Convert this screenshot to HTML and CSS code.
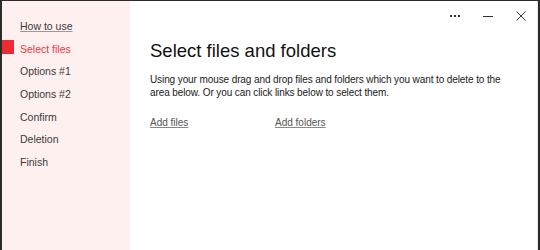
FILE: index.html
```html
<!DOCTYPE html>
<html>
<head>
<meta charset="utf-8">
<link rel="stylesheet" href="styles.css">
</head>
<body>
<div class="window">
  <aside class="sidebar">
    <ul class="steps">
      <li class="step link">How to use</li>
      <li class="step active">Select files</li>
      <li class="step">Options #1</li>
      <li class="step">Options #2</li>
      <li class="step">Confirm</li>
      <li class="step">Deletion</li>
      <li class="step">Finish</li>
    </ul>
  </aside>
  <main class="main">
    <div class="titlebar">
      <span class="ctl">
        <svg width="10" height="3" viewBox="0 0 10 3"><rect x="0" y="0" width="2" height="2" fill="#333"/><rect x="4" y="0" width="2" height="2" fill="#333"/><rect x="8" y="0" width="2" height="2" fill="#333"/></svg>
      </span>
      <span class="ctl">
        <svg width="10" height="1" viewBox="0 0 10 1"><rect x="0" y="0" width="10" height="1" fill="#333"/></svg>
      </span>
      <span class="ctl">
        <svg width="10" height="10" viewBox="0 0 10 10"><path d="M0.5 0.5L9.5 9.5M9.5 0.5L0.5 9.5" stroke="#333" stroke-width="1"/></svg>
      </span>
    </div>
    <div class="content">
      <h1 class="title">Select files and folders</h1>
      <p class="desc">Using your mouse drag and drop files and folders which you want to delete to the area below. Or you can click links below to select them.</p>
      <div class="links">
        <a class="lnk lnk-files" href="#">Add files</a>
        <a class="lnk" href="#">Add folders</a>
      </div>
    </div>
  </main>
</div>
</body>
</html>
```

FILE: styles.css
```css
html, body {
  margin: 0;
  padding: 0;
  background: #ffffff;
}
body {
  font-family: "Liberation Sans", Arial, sans-serif;
  width: 540px;
  height: 250px;
  overflow: hidden;
}
.window {
  display: flex;
  box-sizing: border-box;
  width: 540px;
  height: 250px;
  border-top: 1px solid #2b2b2b;
  border-left: 2px solid #2b2b2b;
  border-right: 2px solid #2b2b2b;
  background: #ffffff;
}
.sidebar {
  width: 128px;
  flex: none;
  background: #fff0f0;
}
.steps {
  list-style: none;
  margin: 0;
  padding: 17px 0 0 0;
}
.step {
  position: relative;
  height: 22.7px;
  line-height: 16px;
  padding-left: 18px;
  font-size: 10.5px;
  color: #3a3a3a;
}
.step.link {
  text-decoration: underline;
  text-decoration-color: #999;
}
.step.active {
  color: #f0353b;
}
.step.active::before {
  content: "";
  position: absolute;
  left: 0;
  top: -1px;
  width: 12px;
  height: 14px;
  background: #ee2b32;
}
.main {
  flex: 1;
  display: flex;
  flex-direction: column;
  border-right: 1px solid #e6e6e6;
}
.titlebar {
  display: flex;
  justify-content: flex-end;
  height: 30px;
}
.ctl {
  width: 33px;
  display: flex;
  align-items: center;
  justify-content: center;
}
.content {
  padding: 8px 24px 0 20px;
}
.title {
  margin: 0;
  font-weight: normal;
  font-size: 18.5px;
  line-height: 24px;
  color: #111111;
}
.desc {
  margin: 10px 0 0 0;
  font-size: 10px;
  letter-spacing: -0.1px;
  line-height: 13px;
  color: #1a1a1a;
}
.links {
  display: flex;
  margin-top: 17px;
  font-size: 10px;
  line-height: 14px;
}
.lnk {
  color: #555555;
  text-decoration: underline;
  text-decoration-color: #888;
}
.lnk-files {
  width: 125px;
}
```
